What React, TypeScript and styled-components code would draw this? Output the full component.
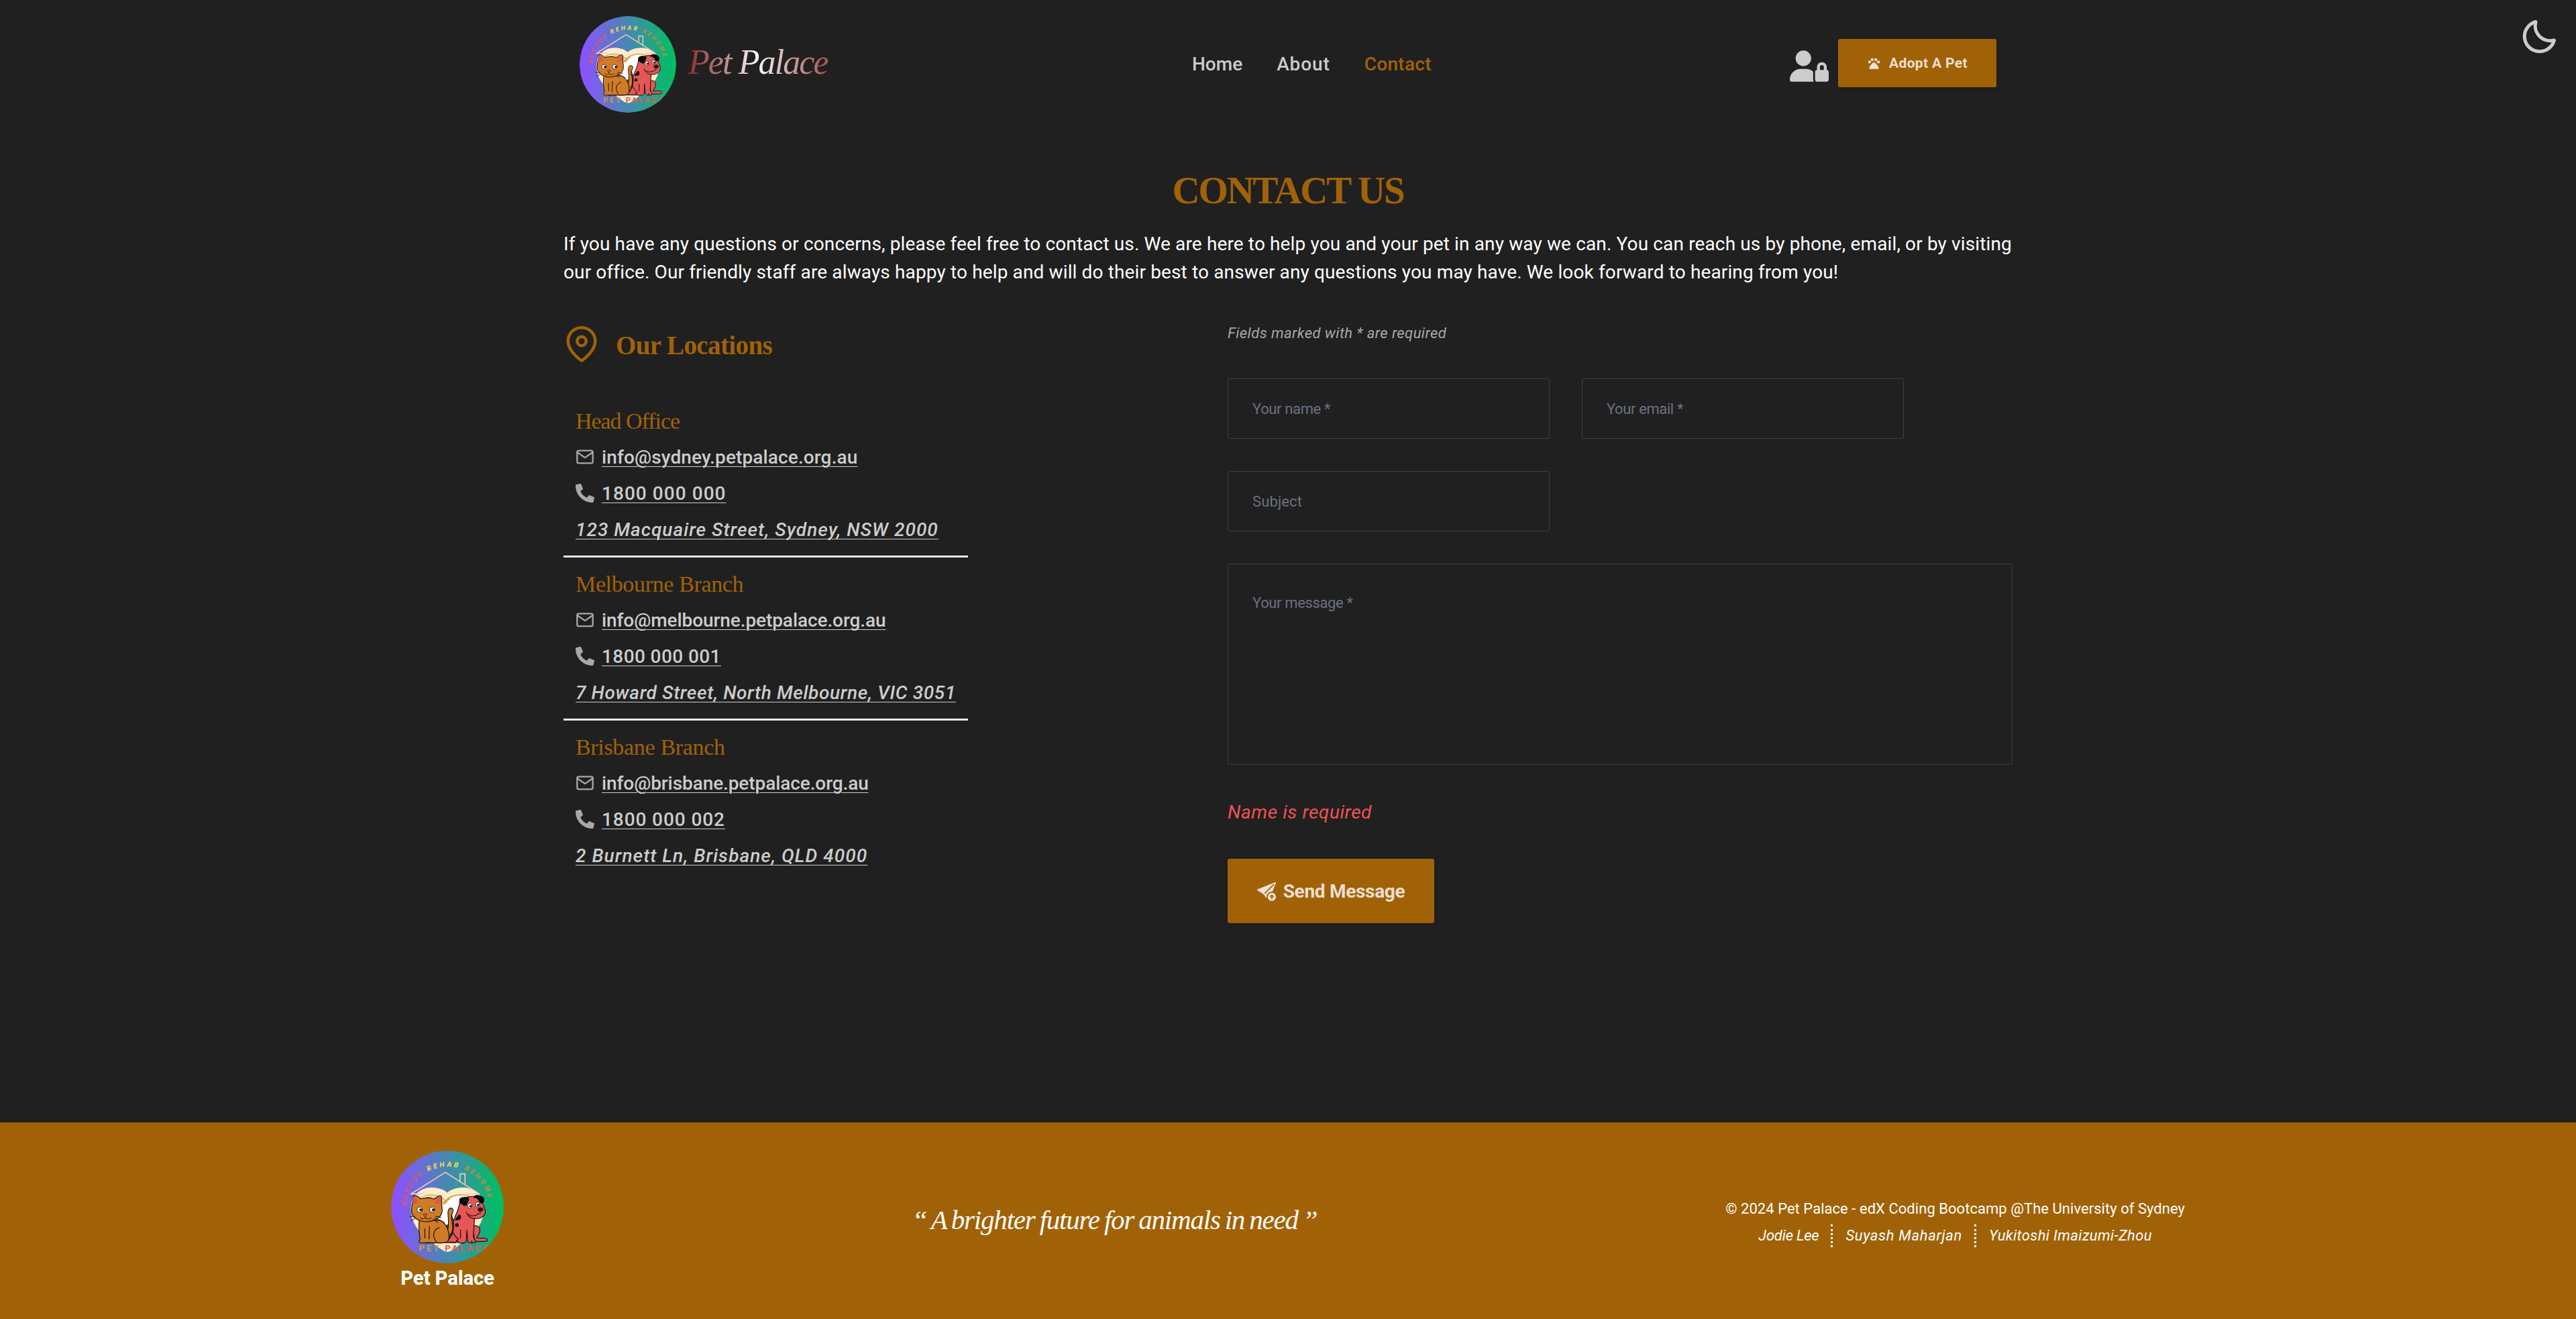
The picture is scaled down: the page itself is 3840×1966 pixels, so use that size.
import React from 'react';
import styled, { createGlobalStyle } from 'styled-components';
import { FaUserLock } from 'react-icons/fa6';
import { FaPhoneAlt } from 'react-icons/fa';
import { MdPets } from 'react-icons/md';
import { FiMail, FiMapPin } from 'react-icons/fi';
import { BiMoon } from 'react-icons/bi';
import { BsFillSendArrowUpFill } from 'react-icons/bs';

const color = {
  page: '#202020',
  brand: '#a16207',
  text: '#cccccc',
  muted: '#a8a8a8',
  cream: '#f0dfd2',
  border: '#404040',
  placeholder: '#6b7280',
};
const sans = 'Roboto, "Liberation Sans", sans-serif';
const serif = '"Liberation Serif", serif';

const GlobalStyle = createGlobalStyle`
  *, *::before, *::after { box-sizing: border-box; margin: 0; padding: 0; }
  body { background: ${color.page}; color: ${color.text}; font-family: ${sans}; font-size: 28px; }
  svg { flex: none; display: block; }
`;

const Page = styled.div`
  position: relative;
  min-height: 1966px;
  display: flex;
  flex-direction: column;
`;

const ThemeToggle = styled.button`
  position: absolute;
  top: 25px;
  right: 25px;
  border: 0;
  background: none;
  color: ${color.text};
  font-size: 60px;
`;

const Header = styled.header`
  width: 2160px;
  height: 192px;
  margin: 0 auto;
  padding: 0 24px;
  display: grid;
  grid-template-columns: 913px 1fr auto;
  align-items: center;
`;

const Brand = styled.a`
  display: flex;
  align-items: center;
  gap: 16px;
`;

const Wordmark = styled.span`
  margin-bottom: 6px;
  padding: 0 6px 0 2px;
  font: italic 400 52px/72px ${serif};
  letter-spacing: -1.9px;
  white-space: nowrap;
  color: transparent;
  background: linear-gradient(90deg, #8a2c2c 0%, #b98383 25%, #ffffff 48%, #c9a0a0 72%, #a04e50 100%);
  background-clip: text;
  -webkit-background-clip: text;
`;

const Nav = styled.nav`
  display: flex;
  gap: 51px;
`;

const NavLink = styled.a<{ $active?: boolean; $track?: number }>`
  color: ${(p) => (p.$active ? color.brand : color.text)};
  font-weight: 500;
  line-height: 44px;
  letter-spacing: ${(p) => p.$track ?? 0}px;
`;

const Actions = styled.div`
  display: flex;
  align-items: center;
  gap: 14px;
  padding-bottom: 4px;
`;

const UserLock = styled(FaUserLock)`
  width: 58px;
  height: 47px;
  margin-top: 9px;
`;

const Button = styled.button<{ $w: number; $h: number; $size: number; $gap: number; $track: number }>`
  width: ${(p) => p.$w}px;
  height: ${(p) => p.$h}px;
  display: flex;
  align-items: center;
  justify-content: center;
  gap: ${(p) => p.$gap}px;
  padding-top: 1px;
  border: 0;
  border-radius: 3px;
  background: ${color.brand};
  color: ${color.cream};
  font: 700 ${(p) => p.$size}px/1.5 ${sans};
  letter-spacing: ${(p) => p.$track}px;
  white-space: nowrap;
  box-shadow: 0 3px 6px rgba(0, 0, 0, 0.12);
`;

const Main = styled.main`
  width: 2160px;
  margin: 0 auto;
  padding-top: 56px;
  flex: 1;
`;

const Title = styled.h1`
  color: ${color.brand};
  font: 700 57px/72px ${serif};
  letter-spacing: -2.2px;
  text-align: center;
  text-transform: uppercase;
`;

const Intro = styled.p`
  margin-top: 23px;
  color: #fff;
  line-height: 42px;
  letter-spacing: 0.133px;
  white-space: nowrap;
`;

const Columns = styled.div`
  display: grid;
  grid-template-columns: 603px 1170px;
  justify-content: space-between;
  margin-top: 52px;
`;

const Locations = styled.section`
  padding-top: 7px;
`;

const LocationsTitle = styled.h2`
  height: 54px;
  display: flex;
  gap: 24px;
  color: ${color.brand};
  font: 700 39px/58px ${serif};
  letter-spacing: -0.6px;
  margin-bottom: 48px;

  svg { font-size: 54px; }
`;

const Branch = styled.article`
  padding: 12px 18px;

  & + & { border-top: 3px solid #e5e7eb; }
`;

const BranchName = styled.h3<{ $track: number }>`
  height: 54px;
  color: ${color.brand};
  font: 400 34px/56px ${serif};
  letter-spacing: ${(p) => p.$track}px;
`;

const ContactRow = styled.div`
  height: 54px;
  display: flex;
  align-items: center;
  gap: 11px;

  svg { color: ${color.muted}; font-size: 28px; }
`;

const ContactLink = styled.a<{ $italic?: boolean; $track: number }>`
  padding-top: 2px;
  font-weight: 500;
  font-style: ${(p) => (p.$italic ? 'italic' : 'normal')};
  line-height: 54px;
  letter-spacing: ${(p) => p.$track}px;
  white-space: nowrap;
  text-decoration: underline 1px;
  text-underline-offset: 4px;
`;

const Form = styled.form`
  display: flex;
  flex-direction: column;
  align-items: flex-start;
  gap: 48px;
`;

const Hint = styled.p`
  margin-bottom: 1px;
  color: ${color.muted};
  font: italic 400 22px/36px ${sans};
  letter-spacing: 0.43px;
`;

const FieldRow = styled.div`
  display: flex;
  gap: 48px;
`;

const Input = styled.input<{ $track: number }>`
  width: 480px;
  height: 90px;
  padding: 1px 36px 0;
  border: 1px solid ${color.border};
  border-radius: 3px;
  background: transparent;
  font: 400 22px/36px ${sans};
  letter-spacing: ${(p) => p.$track}px;

  &::placeholder { color: ${color.placeholder}; opacity: 1; }
`;

const Message = styled.textarea`
  width: 100%;
  height: 300px;
  padding: 40px 36px;
  border: 1px solid ${color.border};
  border-radius: 3px;
  background: transparent;
  resize: none;
  font: 400 22px/36px ${sans};
  letter-spacing: -0.37px;

  &::placeholder { color: ${color.placeholder}; opacity: 1; }
`;

const ErrorText = styled.p`
  padding-top: 2px;
  color: #ef5350;
  font-style: italic;
  line-height: 42px;
  letter-spacing: 0.58px;
`;

const Footer = styled.footer`
  height: 293px;
  padding: 0 583px;
  background: ${color.brand};
  color: #fff;
  display: flex;
  align-items: center;
  justify-content: space-between;
`;

const FooterBrand = styled.div`
  display: flex;
  flex-direction: column;
  align-items: center;
  gap: 4px;
  padding-bottom: 2px;
  font: 800 29px/36px ${sans};
`;

const Quote = styled.p`
  padding-bottom: 3px;
  font: italic 400 41px/70px ${serif};
  letter-spacing: -1.2px;
  word-spacing: -2px;
  white-space: nowrap;
`;

const Credits = styled.div`
  display: flex;
  flex-direction: column;
  align-items: center;
  font-size: 22px;
  line-height: 42px;
  letter-spacing: 0.04px;
  white-space: nowrap;
`;

const Authors = styled.div`
  display: flex;
  align-items: center;
  padding: 2px 1px 0 0;
`;

const Author = styled.em<{ $track: number }>`
  padding: 0 18px 0 19px;
  line-height: 34px;
  letter-spacing: ${(p) => p.$track}px;

  & + & { border-left: 3px dotted #fff; }
`;

function Logo({ size, id }: { size: number; id: string }) {
  return (
    <svg width={size} height={size} viewBox="129.5 165 504 504" fill="none" strokeLinecap="round" strokeLinejoin="round">
      <defs>
        <linearGradient id={`${id}-bg`}>
          <stop offset="0.03" stopColor="#8c52ff" />
          <stop offset="0.97" stopColor="#00bf63" />
        </linearGradient>
        <clipPath id={`${id}-clip`}>
          <circle cx="381.5" cy="417" r="252" />
        </clipPath>
        <path id={`${id}-arc`} d="M197 412A186 186 0 0 1 568 406" />
      </defs>
      <g clipPath={`url(#${id}-clip)`}>
        <circle cx="381.5" cy="417" r="252" fill={`url(#${id}-bg)`} />
        {/* heart */}
        <path d="M381 353C362 336 335 330 308 330C255 331 218 372 218 425C218 505 275 545 322 582C345 600 365 618 381 618C397 618 418 600 440 582C487 545 544 505 544 425C544 372 505 331 453 330C425 330 399 337 381 353Z" fill="#feeccb" />
        {/* wedding-ring arcs behind the animals */}
        <path d="M262 378C282 362 325 356 376 406L368 470H262Z" fill="#fff" />
        <path d="M362 575C345 470 355 365 450 365C480 366 500 372 505 400L450 500Z" fill="#fff" />
        <g stroke="#cc9a3c" strokeWidth="4">
          <path d="M257 380C285 360 335 350 379 396" />
          <path d="M268 384C295 366 335 366 372 404" />
          <path d="M340 450C350 400 385 362 440 363C462 363 480 368 490 376" />
          <path d="M365 404C375 390 385 384 392 380" />
        </g>
        {/* house */}
        <g stroke="#fbc8b6" strokeWidth="5">
          <path d="M279 359H218L372 262L525 359H473" />
          <path d="M438 302V269H460V313" />
        </g>
        {/* dog */}
        <g stroke="#111" strokeWidth="3.5" fill="#e55754">
          <path d="M378 573C384 556 396 545 404 540L377 500C388 492 404 496 420 510L470 540L440 576Z" />
          <path d="M492 505C512 494 530 506 526 526C523 540 516 548 512 555C530 560 540 553 552 557C564 562 561 571 550 571H505Z" />
          <path d="M437 392C433 435 412 460 404 492C400 520 408 545 430 560C422 572 430 579 441 578C458 580 463 576 466 570L468 520L472 568C474 580 498 580 508 573C506 562 499 560 497 550L503 465Z" />
          <path d="M440 400C446 374 495 362 520 376C537 390 546 412 551 436C552 460 525 472 503 469C480 468 469 452 466 440" />
          <path d="M440 520V556M421 571L423 565M490 575V568" fill="none" />
          <path d="M476 450C490 462 510 455 522 447" fill="none" />
        </g>
        <g fill="#090909">
          <path d="M437 379C450 370 462 371 474 375C484 382 474 394 470 402C468 415 455 416 447 406C437 400 431 390 437 379Z" />
          <path d="M498 376C497 365 514 360 527 367C544 370 551 383 543 397C536 406 525 401 521 390C515 378 508 378 498 376Z" />
          <path d="M433 451C446 455 444 470 435 475L413 477Z" />
          <circle cx="424" cy="498" r="8" />
          <ellipse cx="529" cy="428" rx="12" ry="9" />
          <path d="M527 436L531 445L524 448Z" />
        </g>
        <g fill="#fff" stroke="#111" strokeWidth="2.5">
          <ellipse cx="481" cy="412" rx="9" ry="12" />
          <ellipse cx="516" cy="406" rx="9" ry="11" />
        </g>
        <circle cx="484" cy="414" r="5" fill="#111" />
        <circle cx="518" cy="408" r="5" fill="#111" />
        {/* cat */}
        <path d="M366 575C390 568 402 545 408 510C413 480 395 455 397 430" stroke="#111" strokeWidth="5" />
        <g stroke="#111" strokeWidth="3.5" fill="#d17b24">
          <path d="M372 540C394 510 384 470 384 440C386 420 402 417 407 430C409 442 396 446 400 468C406 502 412 528 386 548Z" />
          <path d="M256 478C250 510 257 540 259 562C248 577 261 580 274 576C283 580 292 579 298 575C310 580 322 578 330 577C350 580 380 579 387 565C393 525 376 488 347 476Z" />
          <path d="M280 515L281 555M301 505L299 560M345 510C315 518 314 552 332 572" fill="none" />
          <path d="M223 408C231 392 229 377 229 367C238 362 254 374 262 381C280 375 305 375 322 382C334 370 350 363 354 369C357 381 353 397 356 410C365 450 347 474 300 482C258 488 221 465 221 434Z" />
        </g>
        <path d="M228 372C240 370 250 385 250 399L235 404C225 393 226 379 228 372Z" fill="#df5550" />
        <path d="M352 372C338 371 326 387 323 405L347 398C354 389 354 380 352 372Z" fill="#df5550" />
        <g fill="#fff" stroke="#111" strokeWidth="2.5">
          <circle cx="257" cy="429" r="12" />
          <circle cx="313" cy="429" r="12" />
        </g>
        <circle cx="262" cy="430" r="6" fill="#111" />
        <circle cx="318" cy="430" r="6" fill="#111" />
        <path d="M274 450Q283 444 291 450L283 460Z" fill="#e55754" stroke="#111" strokeWidth="2" />
        <g stroke="#111" strokeWidth="3">
          <path d="M283 460V465C277 473 265 472 260 464M283 465C290 474 302 472 309 464" />
          <path d="M236 459L214 460M238 467L219 479M328 458L353 464M325 465L367 486M318 472L338 486" />
          <path d="M281 577H420" />
        </g>
        <g fontFamily={sans} fontWeight="700">
          <text fontSize="31" fontStyle="italic" textLength="528" lengthAdjust="spacing">
            <textPath href={`#${id}-arc`} textLength="528">
              <tspan fill="#e55754">RESCUE </tspan>
              <tspan fill="#fbdf4b">REHAB </tspan>
              <tspan fill="#c58c3a">REHOME</tspan>
            </textPath>
          </text>
          <text x="253" y="615" fontSize="40" fill="#cc9a3c" textLength="90">PET</text>
          <text x="370" y="615" fontSize="40" fill="#e55754" textLength="190">PALACE</text>
        </g>
      </g>
    </svg>
  );
}

const branches = [
  {
    name: 'Head Office', nameTrack: -1.04,
    email: 'info@sydney.petpalace.org.au', emailTrack: 0.13,
    phone: '1800 000 000', phoneTrack: 1.04,
    address: '123 Macquaire Street, Sydney, NSW 2000', addressTrack: 1.03,
  },
  {
    name: 'Melbourne Branch', nameTrack: -0.35,
    email: 'info@melbourne.petpalace.org.au', emailTrack: -0.08,
    phone: '1800 000 001', phoneTrack: 0.4,
    address: '7 Howard Street, North Melbourne, VIC 3051', addressTrack: 0.64,
  },
  {
    name: 'Brisbane Branch', nameTrack: -0.33,
    email: 'info@brisbane.petpalace.org.au', emailTrack: -0.09,
    phone: '1800 000 002', phoneTrack: 0.9,
    address: '2 Burnett Ln, Brisbane, QLD 4000', addressTrack: 1.05,
  },
];

export default function App() {
  return (
    <Page>
      <GlobalStyle />
      <Header>
        <Brand>
          <Logo size={144} id="header-logo" />
          <Wordmark>Pet Palace</Wordmark>
        </Brand>
        <Nav>
          <NavLink>Home</NavLink>
          <NavLink $track={0.88}>About</NavLink>
          <NavLink $active $track={0.3}>Contact</NavLink>
        </Nav>
        <Actions>
          <UserLock />
          <Button $w={236} $h={72} $size={21} $gap={12} $track={0.35}>
            <MdPets size={21} />
            Adopt A Pet
          </Button>
        </Actions>
      </Header>

      <Main>
        <Title>Contact Us</Title>
        <Intro>
          If you have any questions or concerns, please feel free to contact us. We are here to help you and your pet in any way we can. You can reach us by phone, email, or by visiting
          <br />
          our office. Our friendly staff are always happy to help and will do their best to answer any questions you may have. We look forward to hearing from you!
        </Intro>

        <Columns>
          <Locations>
            <LocationsTitle>
              <FiMapPin />
              Our Locations
            </LocationsTitle>
            {branches.map((b) => (
              <Branch key={b.name}>
                <BranchName $track={b.nameTrack}>{b.name}</BranchName>
                <ContactRow>
                  <FiMail />
                  <ContactLink $track={b.emailTrack}>{b.email}</ContactLink>
                </ContactRow>
                <ContactRow>
                  <FaPhoneAlt />
                  <ContactLink $track={b.phoneTrack}>{b.phone}</ContactLink>
                </ContactRow>
                <ContactRow>
                  <ContactLink $italic $track={b.addressTrack}>{b.address}</ContactLink>
                </ContactRow>
              </Branch>
            ))}
          </Locations>

          <Form>
            <Hint>Fields marked with * are required</Hint>
            <FieldRow>
              <Input placeholder="Your name *" $track={-0.37} />
              <Input placeholder="Your email *" $track={-0.39} />
            </FieldRow>
            <Input placeholder="Subject" $track={0.12} />
            <Message placeholder="Your message *" />
            <ErrorText>Name is required</ErrorText>
            <Button type="button" $w={308} $h={96} $size={28} $gap={11} $track={-0.3}>
              <BsFillSendArrowUpFill size={28} />
              Send Message
            </Button>
          </Form>
        </Columns>
      </Main>

      <Footer>
        <FooterBrand>
          <Logo size={168} id="footer-logo" />
          Pet Palace
        </FooterBrand>
        <Quote>“ A brighter future for animals in need ”</Quote>
        <Credits>
          <span>© 2024 Pet Palace - edX Coding Bootcamp @The University of Sydney</span>
          <Authors>
            <Author $track={-0.22}>Jodie Lee</Author>
            <Author $track={0.67}>Suyash Maharjan</Author>
            <Author $track={0.37}>Yukitoshi Imaizumi-Zhou</Author>
          </Authors>
        </Credits>
      </Footer>

      <ThemeToggle aria-label="Toggle theme">
        <BiMoon />
      </ThemeToggle>
    </Page>
  );
}
